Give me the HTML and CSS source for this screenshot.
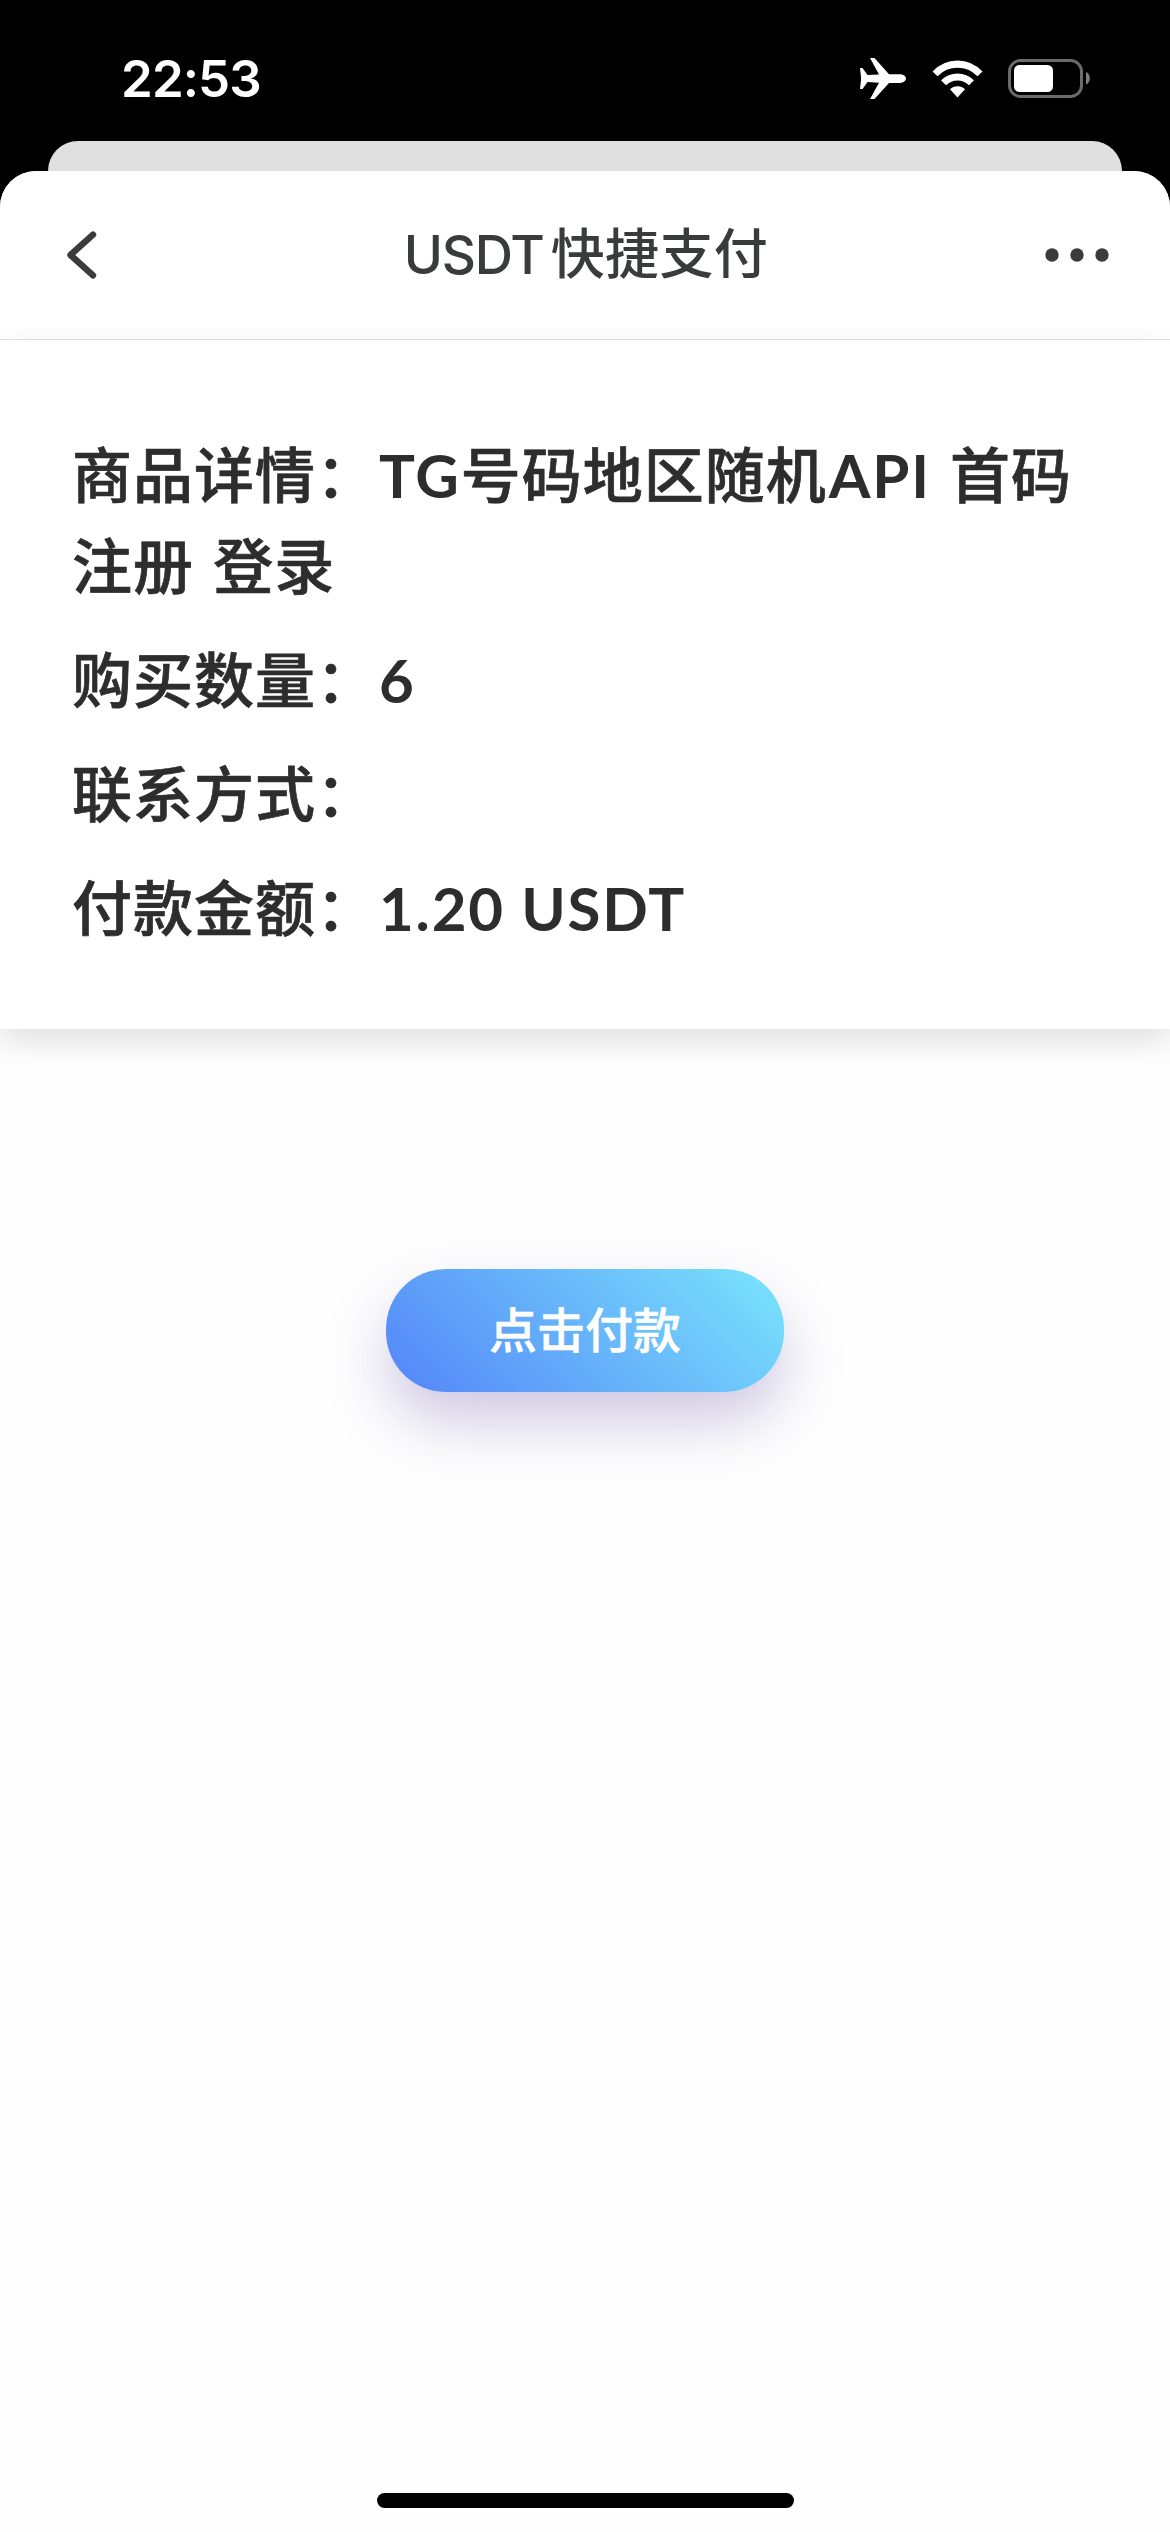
FILE: index.html
```html
<!DOCTYPE html>
<html lang="zh-CN">
<head>
<meta charset="utf-8">
<title>USDT快捷支付</title>
<link rel="stylesheet" href="styles.css">
</head>
<body>
<div class="screen">
  <div class="status-bar">
    <span class="time">22:53</span>
    <div class="status-icons">
      <svg class="plane" width="46" height="42" viewBox="0 0 46 42" fill="#fff"><path d="M0 10h2.500l5 7L19 16.500 10 0h4.500L29 16.200h11c3.500 0 6 2.200 6 4.400s-2.500 4.400-6 4.400H29L14.500 41H10l9-16.200L7.500 24l-5 7H0l1-9v-3z"/></svg>
      <svg class="wifi" width="51" height="38" viewBox="0 0 51 38" fill="#fff"><path d="M0.500 11.500Q11 0.500 25.500 0.500T50.500 11.500L45.500 16.200Q37 7.800 25.500 7.800T5.500 16.200Z"/><path d="M9 20.200Q16 13.500 25.500 13.500T42 20.200L37 25.300Q32 20.500 25.500 20.500T14 25.300Z"/><path d="M18 29.300Q21 26.300 25.500 26.300T33 29.300L25.500 37.500Z"/></svg>
      <svg class="battery" width="83" height="39" viewBox="0 0 83 39"><rect x="1.500" y="1.500" width="72" height="36" rx="11" fill="none" stroke="#6b6b6b" stroke-width="3"/><rect x="6" y="6" width="39" height="27" rx="5.500" fill="#fff"/><path d="M78 13c5 2 5 10.500 0 12.500z" fill="#808080"/></svg>
    </div>
  </div>
  <div class="back-sheet"></div>
  <div class="sheet">
    <header class="nav">
      <svg class="back" width="30" height="48" viewBox="0 0 30 48" fill="none" stroke="#3a3b3d" stroke-width="6.400" stroke-linecap="round" stroke-linejoin="round"><path d="M26 3.700 3.500 24l22.500 20.300"/></svg>
      <h1 class="title"><span class="title-latin">USDT</span>快捷支付</h1>
      <svg class="more" width="64" height="14" viewBox="0 0 64 14" fill="#3a3b3d"><circle cx="7" cy="7" r="6.700"/><circle cx="32" cy="7" r="6.700"/><circle cx="57" cy="7" r="6.700"/></svg>
    </header>
    <section class="details">
      <p class="row">商品详情：<span class="latin">TG</span>号码地区随机<span class="latin">API</span> 首码注册 登录</p>
      <p class="row">购买数量：<span class="latin">6</span></p>
      <p class="row">联系方式：</p>
      <p class="row">付款金额：<span class="latin">1.20 USDT</span></p>
    </section>
    <main class="action"><button class="pay" type="button">点击付款</button></main>
    <div class="home-bar"></div>
  </div>
</div>
</body>
</html>
```
FILE: styles.css
```css
* { box-sizing: border-box; }
body { margin: 0; background: #000; }
.screen {
  width: 1170px;
  height: 2532px;
  display: flex;
  flex-direction: column;
  background: #000;
  overflow: hidden;
}
.status-bar {
  flex: none;
  height: 141px;
  padding: 16px 79px 0 121px;
  display: flex;
  align-items: center;
  justify-content: space-between;
}
.time {
  color: #fff;
  font: 600 51px/60px Inter, sans-serif;
  letter-spacing: -0.9px;
}
.status-icons { display: flex; align-items: center; }
.plane { margin-right: 26px; }
.wifi { margin-right: 25px; }
.back-sheet {
  flex: none;
  height: 30px;
  margin: 0 48px;
  background: #e0e0e0;
  border-radius: 32px 32px 0 0;
}
.sheet {
  flex: 1;
  display: flex;
  flex-direction: column;
  background: #fefefe;
  border-radius: 36px 36px 0 0;
  overflow: hidden;
}
.nav {
  flex: none;
  height: 169px;
  padding: 0 61px 0 67px;
  display: grid;
  grid-template-columns: 100px 1fr 100px;
  align-items: center;
  background: #fff;
  border-bottom: 1px solid #e4e4e4;
}
.title {
  margin: 0;
  padding-right: 4px;
  text-align: center;
  white-space: nowrap;
  color: #3a3b3d;
  font: 500 54px/72px Inter, "Noto Sans CJK SC", sans-serif;
  letter-spacing: 0.4px;
}
.title-latin {
  margin-right: 7px;
  font-size: 53px;
  font-weight: 450;
  letter-spacing: -1.2px;
}
.more { justify-self: end; }
.details {
  flex: none;
  height: 689px;
  padding: 90px 64px 0 72px;
  background: #fff;
  box-shadow: 0 12px 30px rgba(0, 0, 0, 0.12);
  color: #2d2d2d;
  font: 500 60px/91px Lato, "Noto Sans CJK SC", sans-serif;
  letter-spacing: 1px;
  word-spacing: 3px;
  -webkit-text-stroke: 0.7px #2d2d2d;
}
.row { margin: 0 0 23px; }
.latin {
  margin-left: 2px;
  font-weight: 700;
  letter-spacing: 1.8px;
  word-spacing: 0;
  -webkit-text-stroke: 0;
}
.action {
  flex: 1;
  display: flex;
  justify-content: center;
  align-items: flex-start;
  padding-top: 240px;
}
.pay {
  width: 398px;
  height: 123px;
  padding: 0 0 8px;
  border: 0;
  border-radius: 60px;
  background: linear-gradient(45deg, #578cf8 8%, #78e0fc 95%);
  box-shadow: 0 30px 60px rgba(80, 60, 155, 0.27);
  color: #fff;
  font: 500 48px/70px "Noto Sans CJK SC", sans-serif;
  -webkit-text-stroke: 0.5px #fff;
}
.home-bar {
  flex: none;
  width: 417px;
  height: 15px;
  margin: 0 auto 24px;
  border-radius: 8px;
  background: #000;
}
```
